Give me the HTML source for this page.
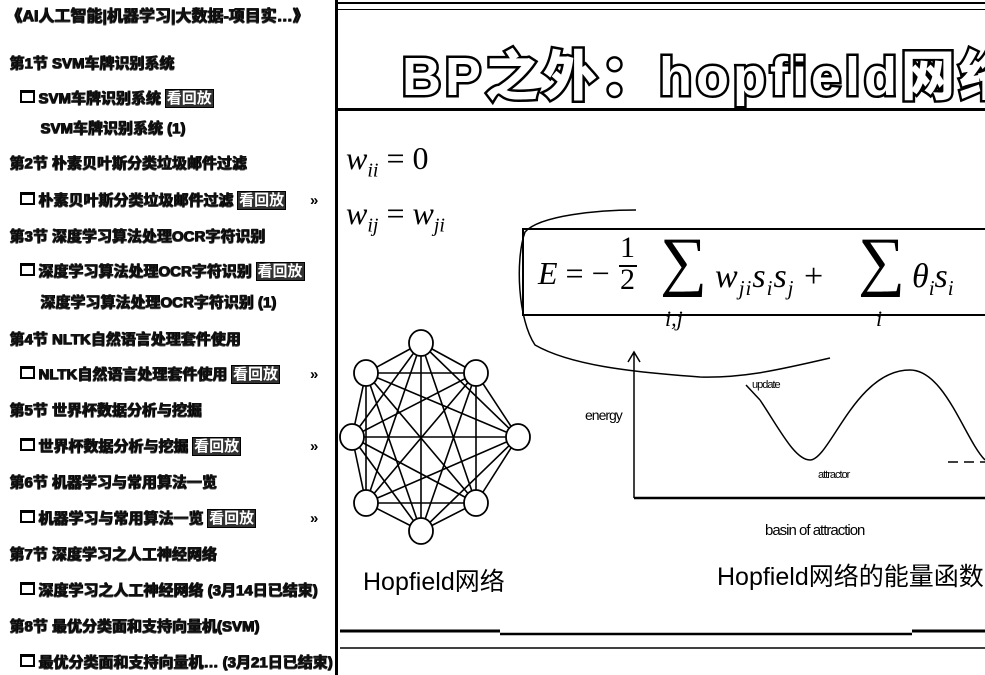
<!DOCTYPE html>
<html><head><meta charset="utf-8"><style>
body{margin:0;width:985px;height:675px;background:#fff;position:relative;overflow:hidden;font-family:"Liberation Sans","Noto Sans CJK SC",sans-serif}
.l{position:absolute;font-size:15px;font-weight:bold;color:#111;white-space:nowrap;text-shadow:1px 0 0 #000,0 1px 0 #444,1px 1px 0 #666;line-height:17px}
.b{border:1.5px solid #000;padding:0 1px;background:#333;color:#fff;text-shadow:none}
.cb{display:inline-block;width:11px;height:8px;border:2px solid #000;border-top-width:3px;margin-right:3px;vertical-align:0}
.ar{position:absolute;left:310px;font-size:15px;font-weight:bold}
.m{position:absolute;font-family:"Liberation Serif","DejaVu Serif",serif;font-style:italic;color:#000}
</style></head><body>
<div class="l" style="left:6px;top:8px;font-size:16px">《AI人工智能|机器学习|大数据-项目实…》</div>
<div class="l" style="left:9px;top:55px">第1节 SVM车牌识别系统</div>
<div class="l" style="left:20px;top:90px"><span class="cb"></span>SVM车牌识别系统 <span class="b">看回放</span></div>
<div class="l" style="left:40px;top:120px">SVM车牌识别系统 (1)</div>
<div class="l" style="left:9px;top:155px">第2节 朴素贝叶斯分类垃圾邮件过滤</div>
<div class="l" style="left:20px;top:192px"><span class="cb"></span>朴素贝叶斯分类垃圾邮件过滤 <span class="b">看回放</span></div>
<div class="ar" style="top:192px">»</div>
<div class="l" style="left:9px;top:228px">第3节 深度学习算法处理OCR字符识别</div>
<div class="l" style="left:20px;top:263px"><span class="cb"></span>深度学习算法处理OCR字符识别 <span class="b">看回放</span></div>
<div class="l" style="left:40px;top:294px">深度学习算法处理OCR字符识别 (1)</div>
<div class="l" style="left:9px;top:331px">第4节 NLTK自然语言处理套件使用</div>
<div class="l" style="left:20px;top:366px"><span class="cb"></span>NLTK自然语言处理套件使用 <span class="b">看回放</span></div>
<div class="ar" style="top:366px">»</div>
<div class="l" style="left:9px;top:402px">第5节 世界杯数据分析与挖掘</div>
<div class="l" style="left:20px;top:438px"><span class="cb"></span>世界杯数据分析与挖掘 <span class="b">看回放</span></div>
<div class="ar" style="top:438px">»</div>
<div class="l" style="left:9px;top:474px">第6节 机器学习与常用算法一览</div>
<div class="l" style="left:20px;top:510px"><span class="cb"></span>机器学习与常用算法一览 <span class="b">看回放</span></div>
<div class="ar" style="top:510px">»</div>
<div class="l" style="left:9px;top:546px">第7节 深度学习之人工神经网络</div>
<div class="l" style="left:20px;top:582px"><span class="cb"></span>深度学习之人工神经网络 (3月14日已结束)</div>
<div class="l" style="left:9px;top:618px">第8节 最优分类面和支持向量机(SVM)</div>
<div class="l" style="left:20px;top:654px"><span class="cb"></span>最优分类面和支持向量机… (3月21日已结束)</div>

<div style="position:absolute;left:335px;top:0;width:3px;height:675px;background:#000"></div>
<div style="position:absolute;left:338px;top:2px;width:647px;height:2px;background:#000"></div>
<div style="position:absolute;left:338px;top:9px;width:647px;height:1px;background:#000"></div>
<div style="position:absolute;left:338px;top:108px;width:647px;height:3px;background:#000"></div>
<div style="position:absolute;left:402px;top:32px;font-size:54px;font-weight:900;color:#fff;-webkit-text-stroke:5px #000;paint-order:stroke fill;letter-spacing:4px;white-space:nowrap;font-family:'Liberation Sans','Noto Sans CJK SC',sans-serif">BP之外：hopfield网络</div>

<div class="m" style="left:346px;top:140px;font-size:32px">w<sub style="font-size:20px">ii</sub><span style="font-style:normal"> = 0</span></div>
<div class="m" style="left:346px;top:195px;font-size:32px">w<sub style="font-size:20px">ij</sub><span style="font-style:normal"> = </span>w<sub style="font-size:20px">ji</sub></div>

<div style="position:absolute;left:522px;top:228px;width:470px;height:84px;border:2px solid #000"></div>
<div class="m" style="left:538px;top:255px;font-size:32px;white-space:nowrap">E <span style="font-style:normal">= −</span></div>
<div class="m" style="left:620px;top:232px;font-size:30px;font-style:normal;line-height:32px;text-align:center">1<br>2</div>
<div style="position:absolute;left:619px;top:265px;width:18px;height:2px;background:#000"></div>
<div class="m" style="left:660px;top:224px;font-size:66px;font-style:normal">∑</div>
<div class="m" style="left:665px;top:306px;font-size:22px">i,j</div>
<div class="m" style="left:715px;top:258px;font-size:34px;white-space:nowrap;letter-spacing:1px">w<sub style="font-size:21px">ji</sub>s<sub style="font-size:21px">i</sub>s<sub style="font-size:21px">j</sub> <span style="font-style:normal">+</span></div>
<div class="m" style="left:858px;top:224px;font-size:66px;font-style:normal">∑</div>
<div class="m" style="left:876px;top:306px;font-size:22px">i</div>
<div class="m" style="left:912px;top:258px;font-size:34px;white-space:nowrap">θ<sub style="font-size:21px">i</sub>s<sub style="font-size:21px">i</sub></div>

<svg style="position:absolute;left:0;top:0" width="985" height="675">
<g fill="none" stroke="#000" stroke-width="1.5">
<path d="M636 210 C600 210 540 215 525 232 C515 260 518 320 535 345 C570 365 630 372 700 377 C740 378 770 372 830 358"/>
<path d="M634 498 V352 M628 362 L634 352 L640 362"/>
<path d="M634 498 H985" stroke-width="2.5"/>
<path d="M746 385 L760 400"/>
<path d="M760 400 C780 430 795 460 810 460 C830 460 855 370 910 370 C945 370 965 440 985 460"/>
<path d="M948 462 H985" stroke-dasharray="10 6"/>
<path d="M340 631 H500 M912 631 H985" stroke-width="3"/>
<path d="M500 634 H912" stroke-width="2.5"/>
<path d="M340 648 H985"/>
</g>
<text x="585" y="420" font-size="14" font-family="Liberation Sans" letter-spacing="-1">energy</text>
<text x="752" y="388" font-size="11" font-family="Liberation Sans" letter-spacing="-1">update</text>
<text x="818" y="478" font-size="11" font-family="Liberation Sans" letter-spacing="-1">attractor</text>
<text x="765" y="535" font-size="15" font-family="Liberation Sans" letter-spacing="-1">basin of attraction</text>
<text x="363" y="590" font-size="25" font-family="Liberation Sans,Noto Sans CJK SC,sans-serif">Hopfield网络</text>
<text x="717" y="585" font-size="25" font-family="Liberation Sans,Noto Sans CJK SC,sans-serif">Hopfield网络的能量函数</text>
</svg>
<svg style="position:absolute;left:0;top:0" width="985" height="675">
<g stroke="#000" stroke-width="1.6">
<line x1="421" y1="343" x2="366" y2="373"/><line x1="421" y1="343" x2="476" y2="373"/><line x1="421" y1="343" x2="352" y2="437"/><line x1="421" y1="343" x2="518" y2="437"/><line x1="421" y1="343" x2="366" y2="503"/><line x1="421" y1="343" x2="476" y2="503"/><line x1="421" y1="343" x2="421" y2="531"/>
<line x1="366" y1="373" x2="476" y2="373"/><line x1="366" y1="373" x2="352" y2="437"/><line x1="366" y1="373" x2="518" y2="437"/><line x1="366" y1="373" x2="366" y2="503"/><line x1="366" y1="373" x2="476" y2="503"/><line x1="366" y1="373" x2="421" y2="531"/>
<line x1="476" y1="373" x2="352" y2="437"/><line x1="476" y1="373" x2="518" y2="437"/><line x1="476" y1="373" x2="366" y2="503"/><line x1="476" y1="373" x2="476" y2="503"/><line x1="476" y1="373" x2="421" y2="531"/>
<line x1="352" y1="437" x2="518" y2="437"/><line x1="352" y1="437" x2="366" y2="503"/><line x1="352" y1="437" x2="476" y2="503"/><line x1="352" y1="437" x2="421" y2="531"/>
<line x1="518" y1="437" x2="366" y2="503"/><line x1="518" y1="437" x2="476" y2="503"/><line x1="518" y1="437" x2="421" y2="531"/>
<line x1="366" y1="503" x2="476" y2="503"/><line x1="366" y1="503" x2="421" y2="531"/><line x1="476" y1="503" x2="421" y2="531"/>
</g>
<g fill="#fff" stroke="#000" stroke-width="1.8">
<ellipse cx="421" cy="343" rx="12" ry="13"/><ellipse cx="366" cy="373" rx="12" ry="13"/><ellipse cx="476" cy="373" rx="12" ry="13"/><ellipse cx="352" cy="437" rx="12" ry="13"/><ellipse cx="518" cy="437" rx="12" ry="13"/><ellipse cx="366" cy="503" rx="12" ry="13"/><ellipse cx="476" cy="503" rx="12" ry="13"/><ellipse cx="421" cy="531" rx="12" ry="13"/>
</g>
</svg>
</body></html>
